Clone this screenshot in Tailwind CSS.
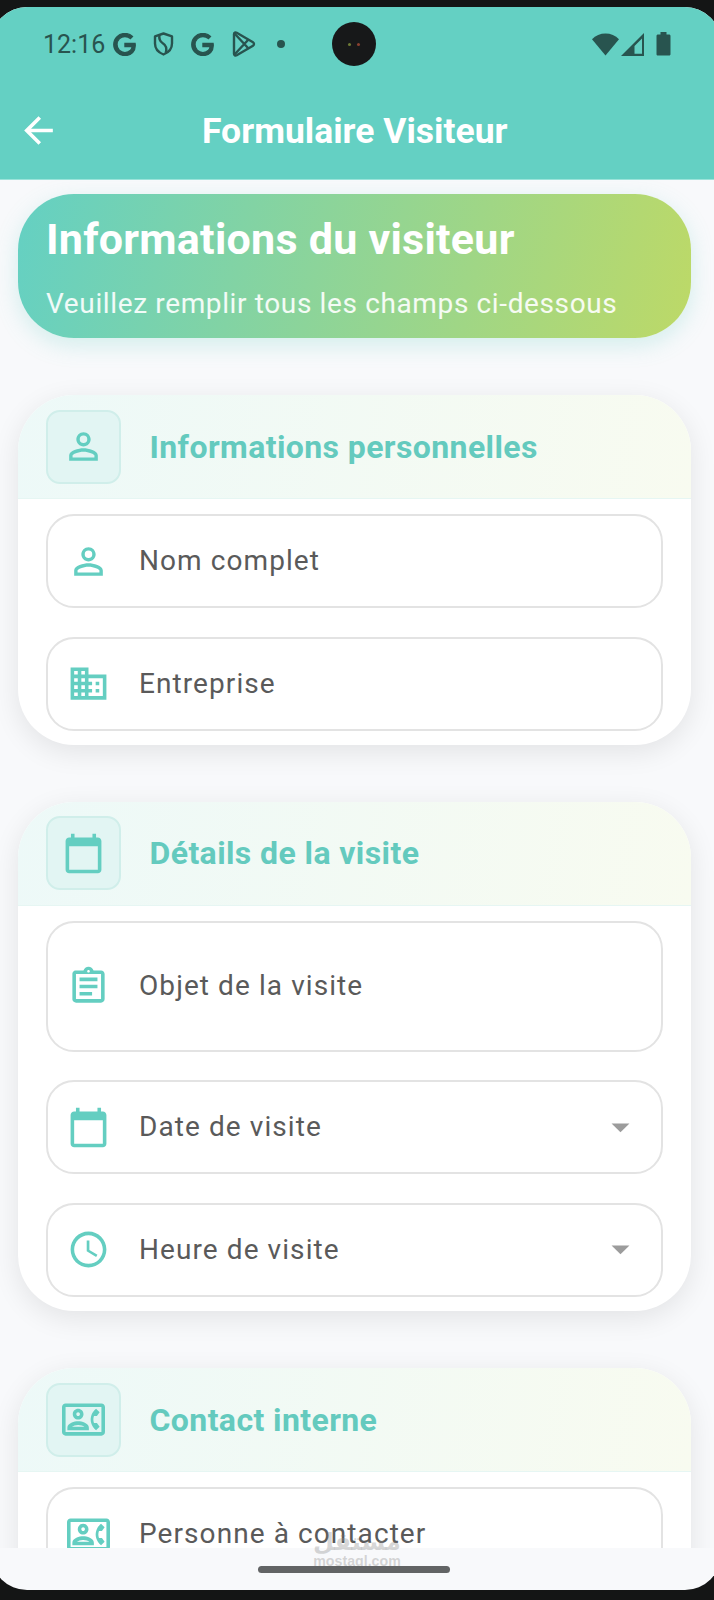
<!DOCTYPE html>
<html lang="fr">
<head>
    <meta charset="UTF-8">
    <meta name="viewport" content="width=device-width, initial-scale=1.0">
    <title>Formulaire Visiteur</title>
    <script src="https://cdn.jsdelivr.net/npm/@tailwindcss/browser@4"></script>
</head>
<body class="bg-[#141515] h-[1600px] overflow-hidden pt-[7px] font-[Roboto,sans-serif]">
    <!-- Icons -->
    <svg class="hidden">
        <symbol id="person" viewBox="0 0 24 24"><path d="M12 5.9a2.1 2.1 0 1 1 0 4.2 2.1 2.1 0 0 1 0-4.2m0 9c2.97 0 6.1 1.46 6.1 2.1v1.1H5.9V17c0-.64 3.13-2.1 6.1-2.1M12 4C9.79 4 8 5.79 8 8s1.79 4 4 4 4-1.79 4-4-1.79-4-4-4zm0 9c-2.67 0-8 1.34-8 4v3h16v-3c0-2.66-5.33-4-8-4z"/></symbol>
        <symbol id="business" viewBox="0 0 24 24"><path d="M12 7V3H2v18h20V7H12zM6 19H4v-2h2v2zm0-4H4v-2h2v2zm0-4H4V9h2v2zm0-4H4V5h2v2zm4 12H8v-2h2v2zm0-4H8v-2h2v2zm0-4H8V9h2v2zm0-4H8V5h2v2zm10 12h-8v-2h2v-2h-2v-2h2v-2h-2V9h8v10zm-2-8h-2v2h2v-2zm0 4h-2v2h2v-2z"/></symbol>
        <symbol id="calendar" viewBox="0 0 24 24"><path d="M20 3h-1V1h-2v2H7V1H5v2H4c-1.1 0-2 .9-2 2v16c0 1.1.9 2 2 2h16c1.1 0 2-.9 2-2V5c0-1.1-.9-2-2-2zm0 18H4V8h16v13z"/></symbol>
        <symbol id="assignment" viewBox="0 0 24 24"><path d="M7 15h7v2H7zm0-4h10v2H7zm0-4h10v2H7zm12-4h-4.18C14.4 1.84 13.3 1 12 1s-2.4.84-2.82 2H5c-.14 0-.27.01-.4.04-.39.08-.74.28-1.01.55-.18.18-.33.4-.43.64-.1.23-.16.49-.16.77v14c0 .27.06.54.16.78s.25.45.43.64c.27.27.62.47 1.01.55.13.02.26.03.4.03h14c1.1 0 2-.9 2-2V5c0-1.1-.9-2-2-2zm-7-.25c.41 0 .75.34.75.75s-.34.75-.75.75-.75-.34-.75-.75.34-.75.75-.75zM19 19H5V5h14v14z"/></symbol>
        <symbol id="clock" viewBox="0 0 24 24"><path d="M11.99 2C6.47 2 2 6.48 2 12s4.47 10 9.99 10C17.52 22 22 17.52 22 12S17.52 2 11.99 2zM12 20c-4.42 0-8-3.58-8-8s3.58-8 8-8 8 3.58 8 8-3.58 8-8 8zm.5-13H11v6l5.250 3.150.750-1.230-4.500-2.670z"/></symbol>
        <symbol id="contact" viewBox="0 0 24 24"><path d="M22 3H2C.9 3 0 3.9 0 5v14c0 1.1.9 2 2 2h20c1.1 0 1.99-.9 1.99-2L24 5c0-1.1-.9-2-2-2zm0 16H2V5h20v14zm-2.99-1.01L21 16l-1.51-2h-1.64c-.22-.63-.35-1.3-.35-2s.13-1.37.35-2h1.64L21 8l-1.99-1.99c-1.31.98-2.28 2.37-2.73 3.99-.18.64-.28 1.31-.28 2s.1 1.36.28 2c.45 1.61 1.42 3.01 2.73 3.99zM9 12c1.65 0 3-1.35 3-3s-1.35-3-3-3-3 1.35-3 3 1.35 3 3 3zm0-4c.55 0 1 .45 1 1s-.45 1-1 1-1-.45-1-1 .45-1 1-1zm6 8.59c0-2.5-3.97-3.58-6-3.58s-6 1.08-6 3.58V18h12v-1.41zM5.48 16c.74-.5 2.22-1 3.52-1s2.77.49 3.52 1H5.48z"/></symbol>
        <symbol id="arrow-down" viewBox="0 0 24 24"><path d="M7 9.700l5 5 5-5z"/></symbol>
        <symbol id="google" viewBox="-0.5 -0.5 25 25"><path stroke="currentColor" stroke-width="1.4" d="M12.48 10.92v3.28h7.84c-.24 1.84-.853 3.187-1.787 4.133-1.147 1.147-2.933 2.4-6.053 2.4-4.827 0-8.6-3.893-8.6-8.72s3.773-8.72 8.6-8.72c2.6 0 4.507 1.027 5.907 2.347l2.307-2.307C18.747 1.44 16.133 0 12.48 0 5.867 0 .307 5.387.307 12s5.56 12 12.173 12c3.573 0 6.267-1.173 8.373-3.36 2.16-2.16 2.84-5.213 2.84-7.667 0-.76-.053-1.467-.173-2.053H12.48z"/></symbol>
    </svg>

    <!-- Phone screen -->
    <div class="w-[730px] h-[1583px] -ml-[9px] rounded-[36px] overflow-hidden bg-[#f8f9fb] flex flex-col">
        <header class="bg-[#64d0c3] h-[173px] shrink-0 border-b border-[#9be3da]">
            <!-- Status bar -->
            <div class="relative h-[74px] pl-[52px] pr-[50px] flex items-center text-[#28544f]">
                <span class="w-[70px] text-[25px] leading-none">12:16</span>
                <svg class="w-[23px] h-[23px] fill-current"><use href="#google"/></svg>
                <svg class="w-[21px] h-[24px] ml-[17px]" viewBox="0 0 21 24" fill="none" stroke="currentColor" stroke-width="2.4" stroke-linejoin="round">
                    <path d="M10.5 1.5 19 4.4v7.2c0 5-3.4 9-8.5 10.9C5.4 20.6 2 16.6 2 11.6V4.4z"/>
                    <path d="M6.500 3c-.8 4 .2 6.300 3.300 8.300 3.600 2.200 4.500 4.700 2.900 9.700"/>
                </svg>
                <svg class="w-[23px] h-[23px] ml-[17px] fill-current"><use href="#google"/></svg>
                <svg class="w-[24px] h-[26px] ml-[18px]" viewBox="0 0 24 26" fill="none" stroke="currentColor" stroke-width="2.4" stroke-linejoin="round">
                    <path d="M2 3.200C2 1.700 3.400 1 4.700 1.700L21 11.300c1.300.8 1.300 2.600 0 3.400L4.700 24.300C3.400 25 2 24.300 2 22.800z"/>
                    <path d="M2.500 2.500 16.500 17.500M2.500 23.500 16.500 8.500"/>
                </svg>
                <span class="w-2 h-2 ml-[21px] rounded-full bg-current"></span>
                <svg class="w-[27px] h-[23px] ml-auto fill-current" viewBox="0 0 27 23"><path d="M13.500 22.500 0 6.300C3.500 2.500 8.300.5 13.500.5s10 2 13.500 5.800z"/></svg>
                <svg class="w-[23px] h-[23px] ml-[2px] fill-current" viewBox="0 0 23 23"><path fill-rule="evenodd" d="M0 23 23 0v23zM21 5.500 13.500 13v7.800H21z"/></svg>
                <svg class="w-[15px] h-[24px] ml-[12px] fill-current" viewBox="0 0 15 24"><path d="M4.500 0h6v2.500H13c.8 0 1.500.6 1.500 1.400v18.300c0 .8-.7 1.400-1.500 1.400H2c-.8 0-1.500-.6-1.500-1.400V3.900c0-.8.700-1.400 1.500-1.400h2.500z"/></svg>
                <!-- Camera -->
                <div class="absolute left-[341px] top-[15px] w-11 h-11 rounded-full bg-[#171819] flex items-center justify-center gap-1.5">
                    <span class="w-[3px] h-[3px] rounded-full bg-[#6d7a35]"></span>
                    <span class="w-[3px] h-[3px] rounded-full bg-[#8a4030]"></span>
                </div>
            </div>
            <!-- App bar -->
            <div class="h-[98px] pl-[26px] flex items-center">
                <svg class="w-[43px] h-[43px] fill-white" viewBox="0 0 24 24"><path d="M20 11H7.830l5.590-5.590L12 4l-8 8 8 8 1.410-1.410L7.830 13H20v-2z"/></svg>
                <h1 class="ml-[142px] pt-[3px] text-[35.500px] leading-none font-bold text-white whitespace-nowrap">Formulaire Visiteur</h1>
            </div>
        </header>

        <main class="h-[1368px] shrink-0 overflow-hidden pt-[14px] pl-[26.500px] pr-[30px]">
            <!-- Banner -->
            <div class="h-[144px] rounded-[56px] bg-linear-[103deg,#64d0c3,#bdd967] shadow-[0_7px_22px_#64d0c340] pl-[28.500px] pt-[20px] whitespace-nowrap">
                <h2 class="text-[43px] leading-[50px] tracking-[0.250px] font-bold text-white">Informations du visiteur</h2>
                <p class="mt-[20px] text-[28px] leading-[40px] tracking-[0.630px] text-white/90">Veuillez remplir tous les champs ci-dessous</p>
            </div>

            <!-- Informations personnelles -->
            <section class="mt-[57px] rounded-[56px] overflow-hidden bg-white shadow-[0_7px_28px_#00000017]">
                <div class="h-[104px] pl-[28px] flex items-center bg-linear-[99deg,#edf9f8,#f8fbf0] border-b border-[#e6f6f3]">
                    <div class="w-[75px] h-[74px] rounded-[14px] border-2 border-[#d0eeea] bg-[#e2f5f3] flex items-center justify-center">
                        <svg class="w-[43px] h-[43px] fill-[#64cec1]"><use href="#person"/></svg>
                    </div>
                    <h3 class="ml-[29px] text-[32px] leading-none tracking-[0.400px] font-bold text-[#64cabe] whitespace-nowrap">Informations personnelles</h3>
                </div>
                <div class="pt-[15px] pb-[14.500px] px-[28.500px] flex flex-col gap-[28.500px]">
                    <div class="h-[94px] pl-[19px] flex items-center rounded-[28px] border-2 border-[#e3e3e3]">
                        <svg class="w-[43px] h-[43px] fill-[#64cec1]"><use href="#person"/></svg>
                        <span class="ml-[29px] text-[28px] leading-none tracking-[1.080px] text-[#5a5a5a]">Nom complet</span>
                    </div>
                    <div class="h-[94px] pl-[19px] flex items-center rounded-[28px] border-2 border-[#e3e3e3]">
                        <svg class="w-[43px] h-[43px] fill-[#64cec1]"><use href="#business"/></svg>
                        <span class="ml-[29px] text-[28px] leading-none tracking-[1.080px] text-[#5a5a5a]">Entreprise</span>
                    </div>
                </div>
            </section>

            <!-- Détails de la visite -->
            <section class="mt-[56.500px] rounded-[56px] overflow-hidden bg-white shadow-[0_7px_28px_#00000017]">
                <div class="h-[104px] pl-[28px] flex items-center bg-linear-[99deg,#edf9f8,#f8fbf0] border-b border-[#e6f6f3]">
                    <div class="w-[75px] h-[74px] rounded-[14px] border-2 border-[#d0eeea] bg-[#e2f5f3] flex items-center justify-center">
                        <svg class="w-[43px] h-[43px] fill-[#64cec1]"><use href="#calendar"/></svg>
                    </div>
                    <h3 class="ml-[29px] text-[32px] leading-none tracking-[0.400px] font-bold text-[#64cabe] whitespace-nowrap">Détails de la visite</h3>
                </div>
                <div class="pt-[15px] pb-[14.500px] px-[28.500px] flex flex-col gap-[28.500px]">
                    <div class="h-[131px] pl-[19px] flex items-center rounded-[28px] border-2 border-[#e3e3e3]">
                        <svg class="w-[43px] h-[43px] fill-[#64cec1]"><use href="#assignment"/></svg>
                        <span class="ml-[29px] text-[28px] leading-none tracking-[1.080px] text-[#5a5a5a]">Objet de la visite</span>
                    </div>
                    <div class="h-[94px] px-[19px] flex items-center rounded-[28px] border-2 border-[#e3e3e3]">
                        <svg class="w-[43px] h-[43px] fill-[#64cec1]"><use href="#calendar"/></svg>
                        <span class="ml-[29px] text-[28px] leading-none tracking-[1.080px] text-[#5a5a5a]">Date de visite</span>
                        <svg class="w-[43px] h-[43px] ml-auto fill-[#9c9c9c]"><use href="#arrow-down"/></svg>
                    </div>
                    <div class="h-[94px] px-[19px] flex items-center rounded-[28px] border-2 border-[#e3e3e3]">
                        <svg class="w-[43px] h-[43px] fill-[#64cec1]"><use href="#clock"/></svg>
                        <span class="ml-[29px] text-[28px] leading-none tracking-[1.080px] text-[#5a5a5a]">Heure de visite</span>
                        <svg class="w-[43px] h-[43px] ml-auto fill-[#9c9c9c]"><use href="#arrow-down"/></svg>
                    </div>
                </div>
            </section>

            <!-- Contact interne -->
            <section class="mt-[57px] rounded-[56px] overflow-hidden bg-white shadow-[0_7px_28px_#00000017]">
                <div class="h-[104px] pl-[28px] flex items-center bg-linear-[99deg,#edf9f8,#f8fbf0] border-b border-[#e6f6f3]">
                    <div class="w-[75px] h-[74px] rounded-[14px] border-2 border-[#d0eeea] bg-[#e2f5f3] flex items-center justify-center">
                        <svg class="w-[43px] h-[43px] fill-[#64cec1]"><use href="#contact"/></svg>
                    </div>
                    <h3 class="ml-[29px] text-[32px] leading-none tracking-[0.400px] font-bold text-[#64cabe] whitespace-nowrap">Contact interne</h3>
                </div>
                <div class="pt-[15px] pb-[60px] px-[28.500px]">
                    <div class="h-[94px] pl-[19px] flex items-center rounded-[28px] border-2 border-[#e3e3e3]">
                        <svg class="w-[43px] h-[43px] fill-[#64cec1]"><use href="#contact"/></svg>
                        <span class="ml-[29px] text-[28px] leading-none tracking-[1.080px] text-[#5a5a5a]">Personne à contacter</span>
                    </div>
                </div>
            </section>
        </main>

        <!-- Gesture bar -->
        <footer class="relative h-[42px] shrink-0">
            <div class="absolute left-[323px] -top-[18px] w-[86px] flex flex-col items-center text-[#8c8c8c]/35 font-bold whitespace-nowrap">
                <span class="text-[24px] leading-[24px] font-['DejaVu_Sans',sans-serif]" dir="rtl">مستقل</span>
                <span class="text-[14.200px] leading-[16px] -mt-px font-['Liberation_Sans',sans-serif]">mostaql.com</span>
            </div>
            <div class="absolute left-[267px] top-[18px] w-[192px] h-[7px] rounded-full bg-[#626465]"></div>
        </footer>
    </div>
</body>
</html>
